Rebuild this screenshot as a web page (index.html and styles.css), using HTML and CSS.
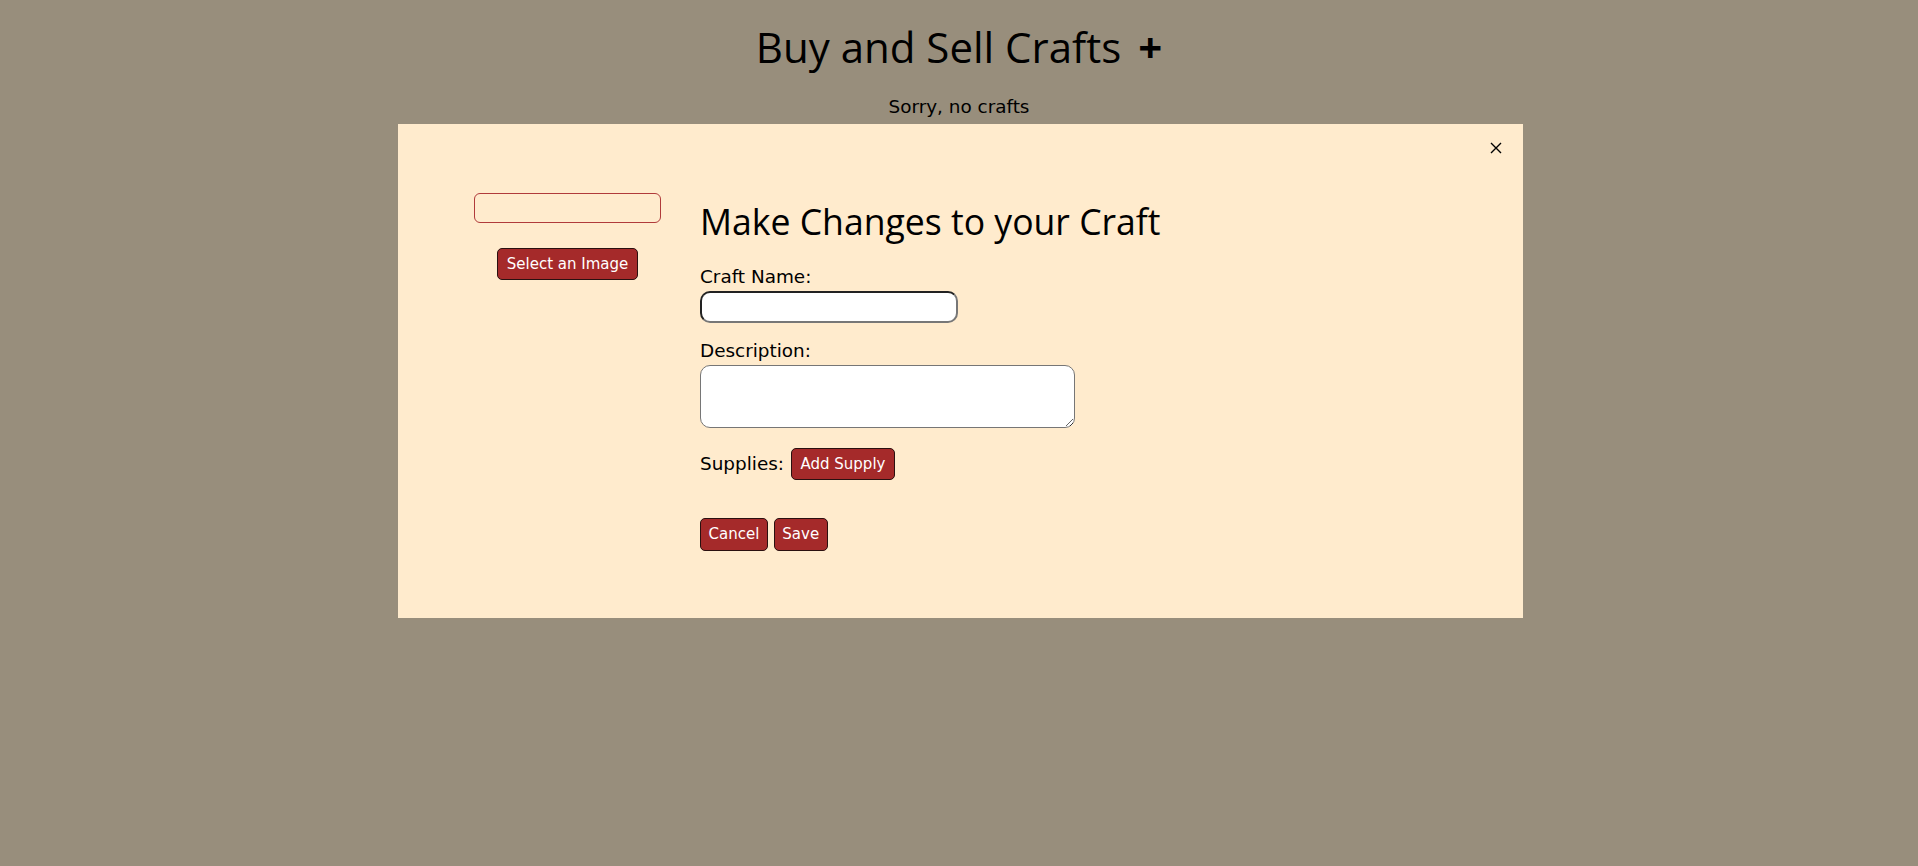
FILE: index.html
```html
<!DOCTYPE html>
<html lang="en">
<head>
<meta charset="utf-8">
<title>Buy and Sell Crafts</title>
<link rel="stylesheet" href="styles.css">
</head>
<body>
<header class="page-header">
  <h1 class="page-title">Buy and Sell Crafts<span class="add-icon">+</span></h1>
  <p class="empty-msg">Sorry, no crafts</p>
</header>

<div class="modal">
  <button class="close-btn" type="button" aria-label="Close">
    <svg width="12" height="12" viewBox="0 0 12 12"><path d="M1 1 L11 11 M11 1 L1 11" stroke="#000" stroke-width="1.4" fill="none"/></svg>
  </button>
  <div class="image-col">
    <div class="image-preview"></div>
    <button class="btn" type="button">Select an Image</button>
  </div>
  <form class="form-col">
    <h2 class="form-title">Make Changes to your Craft</h2>
    <label class="field-label" for="craft-name">Craft Name:</label>
    <input id="craft-name" class="text-input" type="text">
    <label class="field-label desc-label" for="craft-desc">Description:</label>
    <textarea id="craft-desc" class="text-area"></textarea>
    <div class="supplies-row">
      <span class="supplies-label">Supplies:</span>
      <button class="btn" type="button">Add Supply</button>
    </div>
    <div class="actions">
      <button class="btn" type="button">Cancel</button>
      <button class="btn" type="submit">Save</button>
    </div>
  </form>
</div>
</body>
</html>
```

FILE: styles.css
```css
html, body {
  margin: 0;
  padding: 0;
}

body {
  background: #988e7c;
  font-family: "DejaVu Sans", Verdana, sans-serif;
  font-size: 18.4px;
  color: #000;
  min-height: 866px;
}

.page-header {
  text-align: center;
  padding-top: 18px;
}

.page-title {
  margin: 0;
  font-family: "Open Sans", "Segoe UI", sans-serif;
  font-weight: 400;
  font-size: 42px;
  line-height: 57px;
}

.add-icon {
  font-weight: 700;
  margin-left: 17px;
}

.empty-msg {
  margin: 21px 0 0;
  line-height: 22px;
}

.modal {
  position: fixed;
  top: 124px;
  left: 398px;
  width: 1125px;
  height: 494px;
  box-sizing: border-box;
  background: #ffebcd;
  display: flex;
  align-items: flex-start;
  padding: 69px 0 0 60px;
}

.close-btn {
  position: absolute;
  top: 18px;
  right: 21px;
  padding: 0;
  margin: 0;
  border: 0;
  background: transparent;
  width: 12px;
  height: 12px;
  display: block;
  cursor: pointer;
}

.close-btn svg {
  display: block;
}

.image-col {
  width: 219px;
  display: flex;
  flex-direction: column;
  align-items: center;
}

.image-preview {
  width: 187px;
  height: 30px;
  box-sizing: border-box;
  border: 1px solid #b03a3a;
  border-radius: 6px;
}

.btn {
  font-family: "DejaVu Sans", Verdana, sans-serif;
  font-size: 15px;
  line-height: 19px;
  color: #fff;
  background: #a52a2a;
  border: 1px solid #2a1010;
  border-radius: 5px;
  padding: 5.5px 8.5px;
  margin: 0;
  cursor: pointer;
}

.image-col .btn {
  margin-top: 25px;
}

.form-col {
  margin: 0 0 0 23px;
  display: flex;
  flex-direction: column;
  align-items: flex-start;
}

.form-title {
  margin: 4px 0 0;
  font-family: "Open Sans", "Segoe UI", sans-serif;
  font-weight: 400;
  font-size: 35.6px;
  line-height: 48px;
}

.field-label {
  display: block;
  line-height: 22px;
  margin-top: 21px;
}

.desc-label {
  margin-top: 17px;
}

.text-input {
  margin-top: 3px;
  width: 258px;
  height: 32px;
  box-sizing: border-box;
  border-style: solid;
  border-width: 2px;
  border-color: #222 #777 #777 #222;
  border-radius: 10px;
  background: #fff;
  padding: 0 8px;
  font-family: inherit;
  font-size: 15px;
}

.text-area {
  display: block;
  margin-top: 3px;
  width: 375px;
  height: 63px;
  box-sizing: border-box;
  border: 1px solid #767676;
  border-radius: 10px;
  background: #fff;
  font-family: inherit;
  font-size: 15px;
  padding: 4px 8px;
}

.supplies-row {
  margin-top: 20px;
  display: flex;
  align-items: center;
  gap: 7px;
}

.supplies-label {
  line-height: 22px;
}

.actions {
  margin-top: 38px;
  display: flex;
  gap: 6px;
}

.actions .btn {
  padding: 6px 7.5px;
}
```
